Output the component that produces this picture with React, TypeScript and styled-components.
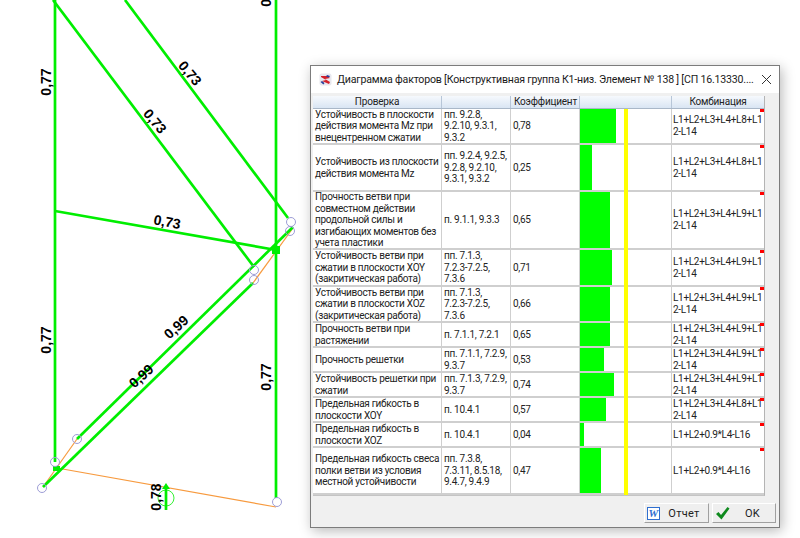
import React from "react";
import styled, { createGlobalStyle } from "styled-components";

const Global = createGlobalStyle`
  html, body { margin: 0; padding: 0; background: #fff; }
  #root { width: 800px; height: 538px; overflow: hidden; }
`;

const Desktop = styled.div`
  position: relative;
  width: 800px;
  height: 538px;
  background: #fff;
  overflow: hidden;
`;

const Drawing = styled.svg`
  display: block;
  width: 800px;
  height: 538px;
`;

const Label = styled.text`
  font-family: "Liberation Sans", Arial, sans-serif;
  font-weight: 700;
  font-size: 14px;
  fill: #000;
  text-anchor: middle;
  dominant-baseline: middle;
`;

const Dialog = styled.div`
  position: absolute;
  left: 310px;
  top: 65px;
  width: 468px;
  height: 461px;
  display: flex;
  flex-direction: column;
  background: #f0f0f0;
  border: 1px solid #7c7c7c;
  box-shadow: 2px 3px 12px rgba(0, 0, 0, 0.28);
  font-family: Roboto, "Liberation Sans", sans-serif;
  color: #111;
`;

const TitleBar = styled.div`
  display: flex;
  align-items: center;
  height: 27px;
  padding-left: 8px;
  gap: 5px;
  background: #fff;
`;

const TitleText = styled.div`
  font-size: 10.6px;
  letter-spacing: -0.2px;
  color: #1a1a1a;
  white-space: nowrap;
  width: 414px;
`;

const CloseButton = styled.div`
  display: flex;
  align-items: center;
  justify-content: center;
  width: 20px;
  height: 20px;
`;

const Table = styled.div`
  margin: 3px 0 0 2px;
  width: 451px;
  background: #fff;
  border-right: 1px solid #b4b4b4;
  border-bottom: 1px solid #c4c4c4;
`;

const HeadRow = styled.div`
  display: grid;
  grid-template-columns: 129px 69px 69px 92px 92px;
  height: 13px;
  background: linear-gradient(#f6f9fd, #d9e5f3);
  border-bottom: 1px solid #a9b7c8;
  box-sizing: border-box;
`;

const HeadCell = styled.div<{ $left?: boolean }>`
  display: flex;
  align-items: center;
  justify-content: ${(p) => (p.$left ? "flex-start" : "center")};
  padding-left: ${(p) => (p.$left ? "3px" : "0")};
  font-size: 10px;
  letter-spacing: -0.2px;
  line-height: 12px;
  color: #222;
  border-right: 1px solid #b7c6d8;
  white-space: nowrap;
  overflow: hidden;
  &:last-child { border-right: 0; }
`;

const Row = styled.div<{ $h: number }>`
  display: grid;
  grid-template-columns: 129px 69px 69px 92px 92px;
  height: ${(p) => p.$h}px;
  box-sizing: border-box;
  border-bottom: 2px solid #cfcfcf;
`;

const Cell = styled.div`
  display: flex;
  align-items: center;
  padding-left: 2px;
  box-sizing: border-box;
  font-size: 10px;
  letter-spacing: -0.28px;
  line-height: 11.6px;
  color: #222;
  white-space: pre;
  border-right: 1px solid #cfcfcf;
  overflow: hidden;
`;

const BarCell = styled.div`
  position: relative;
  border-right: 1px solid #cfcfcf;
`;

const Bar = styled.div`
  height: 100%;
  background: #00ff00;
`;

const Limit = styled.div`
  position: absolute;
  left: 44px;
  top: 0;
  bottom: -2px;
  width: 4px;
  background: #ffff00;
`;

const ComboCell = styled.div`
  position: relative;
  display: flex;
  align-items: center;
  padding-left: 1px;
  font-size: 10px;
  letter-spacing: -0.3px;
  line-height: 11.6px;
  color: #222;
  white-space: pre;
`;

const Marker = styled.div`
  position: absolute;
  right: 0;
  top: 0;
  width: 4px;
  height: 3px;
  background: #f00;
`;

const Footer = styled.div`
  display: flex;
  justify-content: flex-end;
  gap: 3px;
  margin-top: 7px;
  padding-right: 3px;
`;

const Button = styled.div<{ $w: number }>`
  display: flex;
  align-items: center;
  width: ${(p) => p.$w}px;
  height: 20px;
  box-sizing: border-box;
  padding-left: 2px;
  background: #efefef;
  border: 1px solid;
  border-color: #fff #a0a0a0 #a0a0a0 #fff;
  font-size: 11px;
  color: #222;
`;

const ButtonLabel = styled.span`
  flex: 1;
  text-align: center;
  letter-spacing: 0.3px;
`;

const WordBadge = styled.span`
  display: flex;
  align-items: center;
  justify-content: center;
  width: 13px;
  height: 13px;
  box-sizing: border-box;
  background: #fff;
  border: 1px solid #2f6fd0;
  font-family: "Liberation Serif", serif;
  font-style: italic;
  font-weight: 700;
  font-size: 11px;
  color: #2f6fd0;
`;

const rows = [
  { h: 36, a: "Устойчивость в плоскости\nдействия момента Mz при\nвнецентренном сжатии", b: "пп. 9.2.8,\n9.2.10, 9.3.1,\n9.3.2", k: "0,78", w: 36, c: "L1+L2+L3+L4+L8+L1\n2-L14" },
  { h: 47, a: "Устойчивость из плоскости\nдействия момента Mz", b: "пп. 9.2.4, 9.2.5,\n9.2.8, 9.2.10,\n9.3.1, 9.3.2", k: "0,25", w: 12, c: "L1+L2+L3+L4+L8+L1\n2-L14" },
  { h: 58, a: "Прочность ветви при\nсовместном действии\nпродольной силы и\nизгибающих моментов без\nучета пластики", b: "п. 9.1.1, 9.3.3", k: "0,65", w: 30, c: "L1+L2+L3+L4+L9+L1\n2-L14" },
  { h: 37, a: "Устойчивость ветви при\nсжатии в плоскости XOY\n(закритическая работа)", b: "пп. 7.1.3,\n7.2.3-7.2.5,\n7.3.6", k: "0,71", w: 32, c: "L1+L2+L3+L4+L9+L1\n2-L14" },
  { h: 36, a: "Устойчивость ветви при\nсжатии в плоскости XOZ\n(закритическая работа)", b: "пп. 7.1.3,\n7.2.3-7.2.5,\n7.3.6", k: "0,66", w: 30, c: "L1+L2+L3+L4+L9+L1\n2-L14" },
  { h: 25, a: "Прочность ветви при\nрастяжении", b: "п. 7.1.1, 7.2.1", k: "0,65", w: 30, c: "L1+L2+L3+L4+L9+L1\n2-L14" },
  { h: 25, a: "Прочность решетки", b: "пп. 7.1.1, 7.2.9,\n9.3.7", k: "0,53", w: 24, c: "L1+L2+L3+L4+L9+L1\n2-L14" },
  { h: 25, a: "Устойчивость решетки при\nсжатии", b: "пп. 7.1.3, 7.2.9,\n9.3.7", k: "0,74", w: 34, c: "L1+L2+L3+L4+L9+L1\n2-L14" },
  { h: 25, a: "Предельная гибкость в\nплоскости XOY", b: "п. 10.4.1", k: "0,57", w: 26, c: "L1+L2+L3+L4+L8+L1\n2-L14" },
  { h: 25, a: "Предельная гибкость в\nплоскости XOZ", b: "п. 10.4.1", k: "0,04", w: 4, c: "L1+L2+0.9*L4-L16" },
  { h: 47, a: "Предельная гибкость свеса\nполки ветви из условия\nместной устойчивости", b: "пп. 7.3.8,\n7.3.11, 8.5.18,\n9.4.7, 9.4.9", k: "0,47", w: 21, c: "L1+L2+0.9*L4-L16" },
];

const G = "#00ee00";
const greenLines = [
  [55, 0, 55, 462],
  [276, 0, 276, 498],
  [53, 0, 254, 267],
  [125, 0, 288, 218],
  [55, 211, 276, 250],
  [43, 487, 253, 283],
  [77, 439, 293, 227],
];
const nodes = [
  [42, 488], [55, 462], [77, 439], [277, 502], [254, 270], [254, 280], [291, 222], [290, 231],
];
const labels = [
  { t: "0,77", x: 47, y: 82, r: -90 },
  { t: "0,77", x: 47, y: 340, r: -90 },
  { t: "0,77", x: 267, y: 377, r: -90 },
  { t: "0,77", x: 267, y: -7, r: -90 },
  { t: "0,73", x: 189, y: 74, r: 50 },
  { t: "0,73", x: 154, y: 122, r: 50 },
  { t: "0,73", x: 167, y: 223, r: 10 },
  { t: "0,99", x: 177, y: 328, r: -42 },
  { t: "0,99", x: 142, y: 377, r: -42 },
  { t: "0,78", x: 157, y: 497, r: -90 },
];

export default function App() {
  return (
    <Desktop>
      <Global />
      <Drawing viewBox="0 0 800 538">
        <g stroke="#f79a3e" strokeWidth="1.2" fill="none">
          <line x1="57" y1="468" x2="276" y2="507" />
          <line x1="43" y1="487" x2="77" y2="439" />
          <line x1="253" y1="283" x2="293" y2="228" />
        </g>
        <g stroke={G} strokeWidth="2.7" fill="none">
          {greenLines.map((l, i) => (
            <line key={i} x1={l[0]} y1={l[1]} x2={l[2]} y2={l[3]} />
          ))}
          <line x1="166" y1="486" x2="166" y2="510" />
          <circle cx="166" cy="498" r="8" strokeWidth="0.8" />
        </g>
        <g fill={G}>
          <rect x="272" y="246" width="8" height="8" />
          <rect x="53" y="466" width="7" height="5" />
          <path d="M166 483l-4 6h8z" />
        </g>
        <g stroke="#9d9dd6" strokeWidth="1" fill="none">
          {nodes.map((n, i) => (
            <circle key={i} cx={n[0]} cy={n[1]} r="4.5" />
          ))}
        </g>
        {labels.map((l, i) => (
          <Label key={i} x={l.x} y={l.y} transform={`rotate(${l.r} ${l.x} ${l.y})`}>
            {l.t}
          </Label>
        ))}
      </Drawing>
      <Dialog>
        <TitleBar>
          <svg width="13" height="13" viewBox="0 0 13 13">
            <rect x="0.5" y="0.5" width="12" height="12" rx="2" fill="#e8e8ee" />
            <path d="M2 3l6 0 3 2-5 1 5 3-1 2-7-3 4-1-5-3z" fill="#d4202a" />
            <path d="M1.5 9l3 2.5 1-1.5-2.5-2zM8 2l3 1-1 1.5-3-1z" fill="#2b3f9c" />
          </svg>
          <TitleText>Диаграмма факторов [Конструктивная группа К1-низ. Элемент № 138 ] [СП 16.13330....</TitleText>
          <CloseButton>
            <svg width="11" height="11" viewBox="0 0 11 11">
              <path d="M1 1l9 9M10 1l-9 9" stroke="#333" strokeWidth="1" fill="none" />
            </svg>
          </CloseButton>
        </TitleBar>
        <Table>
          <HeadRow>
            <HeadCell>Проверка</HeadCell>
            <HeadCell />
            <HeadCell $left>Коэффициент</HeadCell>
            <HeadCell />
            <HeadCell>Комбинация</HeadCell>
          </HeadRow>
          {rows.map((r, i) => (
            <Row key={i} $h={r.h}>
              <Cell>{r.a}</Cell>
              <Cell>{r.b}</Cell>
              <Cell>{r.k}</Cell>
              <BarCell>
                <Bar style={{ width: r.w }} />
                <Limit />
              </BarCell>
              <ComboCell>
                {r.c}
                <Marker />
              </ComboCell>
            </Row>
          ))}
        </Table>
        <Footer>
          <Button $w={65}>
            <WordBadge>W</WordBadge>
            <ButtonLabel>Отчет</ButtonLabel>
          </Button>
          <Button $w={64}>
            <svg width="15" height="14" viewBox="0 0 15 14">
              <path d="M1 8l2.5-2 2.5 3 6.5-8 2 1.5-8 11z" fill="#0f8a1e" />
            </svg>
            <ButtonLabel>OK</ButtonLabel>
          </Button>
        </Footer>
      </Dialog>
    </Desktop>
  );
}
